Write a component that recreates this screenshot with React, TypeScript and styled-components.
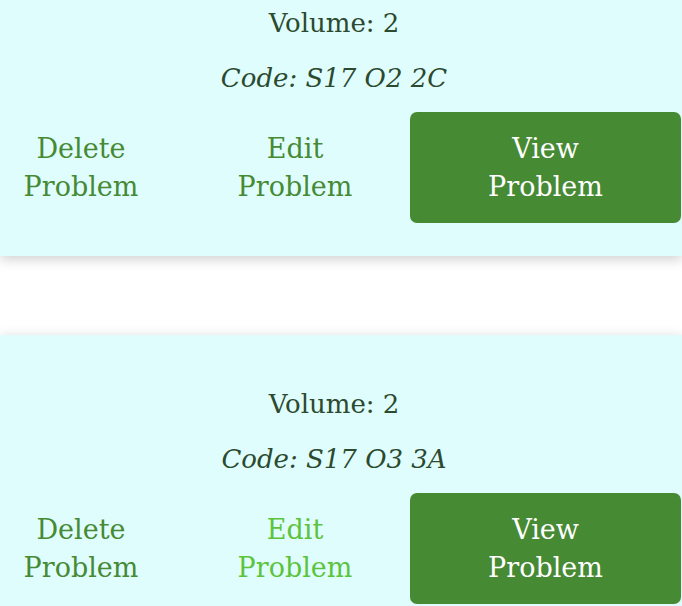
import React from 'react';
import styled, { createGlobalStyle } from 'styled-components';

interface Problem {
  id: string;
  volume: number;
  code: string;
  editHover?: boolean;
}

const GlobalStyle = createGlobalStyle`
  html, body {
    margin: 0;
    padding: 0;
    background: #ffffff;
    overflow: hidden;
  }
  body {
    font-family: "DejaVu Serif", "Liberation Serif", serif;
  }
`;

const List = styled.div`
  display: flex;
  flex-direction: column;
  gap: 79px;
  margin-top: -46px;
`;

const Card = styled.div`
  background-color: #e0fdfd;
  box-shadow: 0 3px 12px rgba(0, 0, 0, 0.2);
  padding: 50px 0 33px 0;
  display: flex;
  flex-direction: column;
`;

const Info = styled.p<{ $italic?: boolean }>`
  margin: 0;
  padding-right: 14px;
  text-align: center;
  font-size: 26px;
  line-height: 38px;
  color: #2b4a2f;
  font-style: ${({ $italic }) => ($italic ? 'italic' : 'normal')};
  & + & {
    margin-top: 17px;
  }
`;

const Actions = styled.div`
  display: flex;
  align-items: center;
  margin-top: 15px;
  padding-right: 1px;
`;

const TextAction = styled.a<{ $hover?: boolean; $width?: number }>`
  display: block;
  text-align: center;
  font-size: 27px;
  line-height: 38px;
  color: ${({ $hover }) => ($hover ? '#5cc43c' : '#468a34')};
  text-decoration: none;
  cursor: pointer;
`;

const DeleteAction = styled(TextAction)`
  width: 162px;
`;

const EditAction = styled(TextAction)`
  flex: 1;
  margin-left: 18px;
`;

const ViewButton = styled.button`
  width: 271px;
  height: 111px;
  border: none;
  border-radius: 7px;
  background-color: #468a34;
  color: #ffffff;
  font-family: "DejaVu Serif", "Liberation Serif", serif;
  font-size: 27px;
  line-height: 38px;
  padding: 0 40px;
  cursor: pointer;
`;

const problems: Problem[] = [
  { id: 'p1', volume: 2, code: 'S17 O2 2C' },
  { id: 'p2', volume: 2, code: 'S17 O3 3A', editHover: true },
];

const App = () => {
  return (
    <>
      <GlobalStyle />
      <List>
        {problems.map(p => (
          <Card key={p.id}>
            <Info>Volume: {p.volume}</Info>
            <Info $italic>Code: {p.code}</Info>
            <Actions>
              <DeleteAction>Delete<br />Problem</DeleteAction>
              <EditAction $hover={p.editHover}>Edit<br />Problem</EditAction>
              <ViewButton>View<br />Problem</ViewButton>
            </Actions>
          </Card>
        ))}
      </List>
    </>
  );
};

export default App;
